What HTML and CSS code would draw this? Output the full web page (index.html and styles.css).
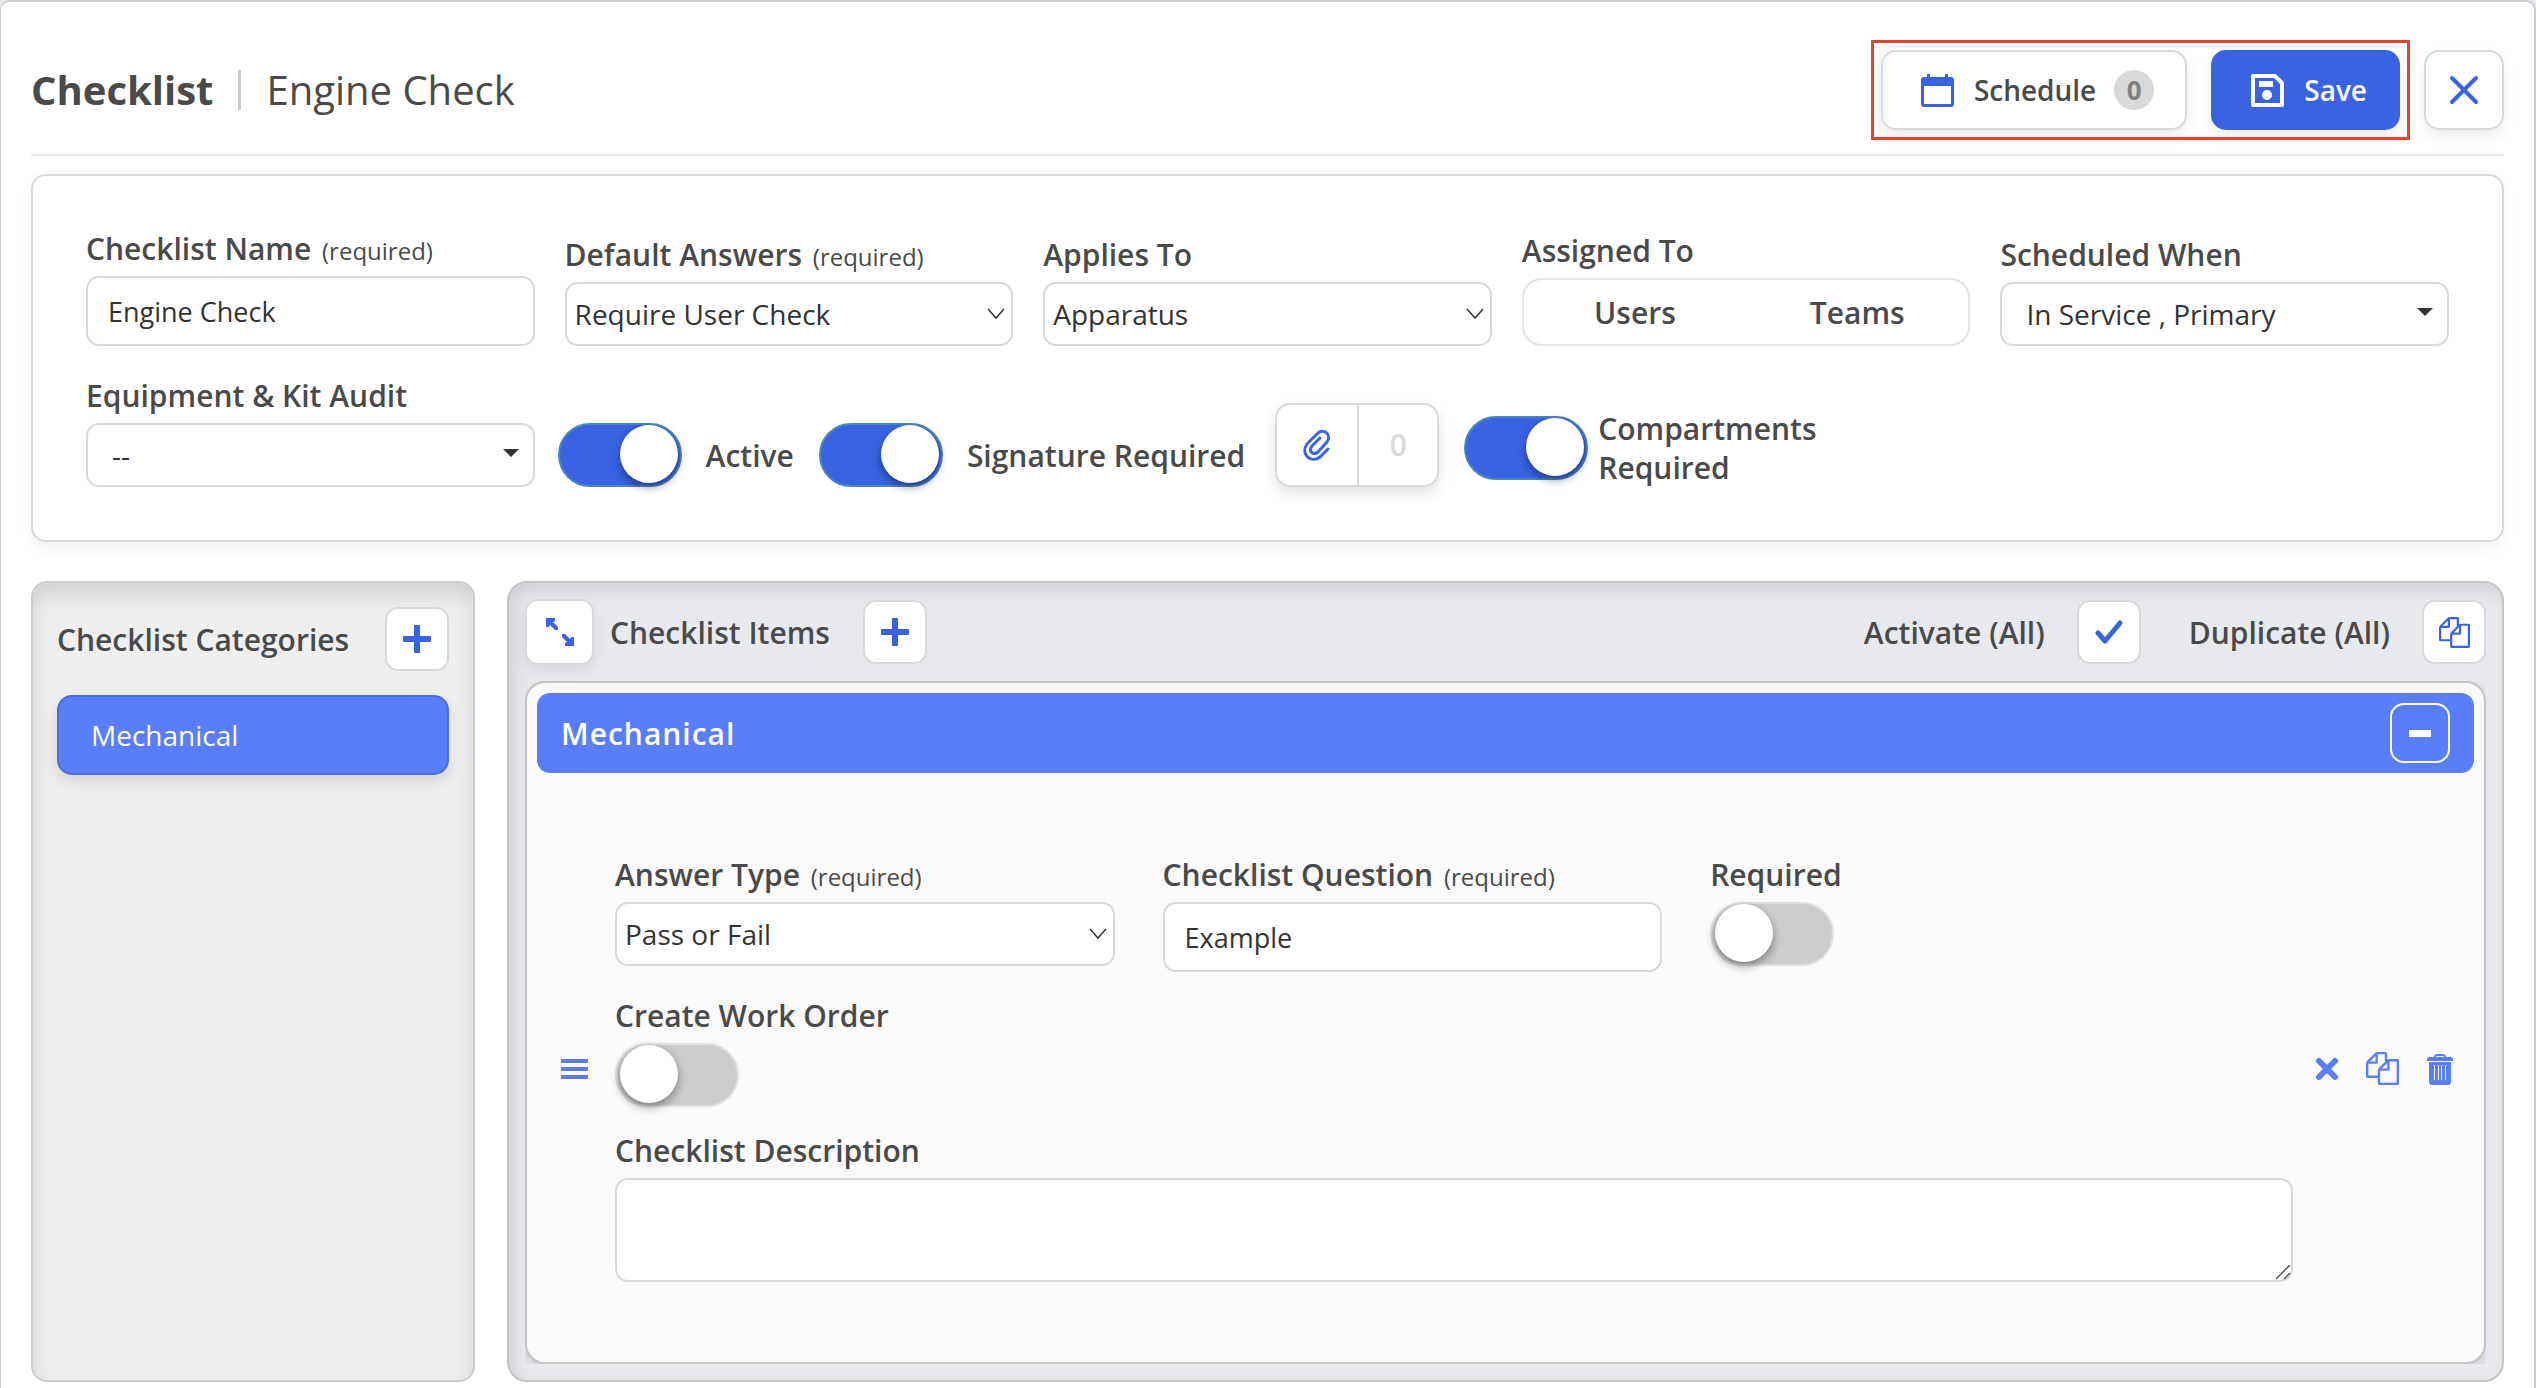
FILE: index.html
```html
<!DOCTYPE html>
<html lang="en">

<head>
    <meta charset="UTF-8">
    <meta name="viewport" content="width=device-width, initial-scale=1.0">
    <title>Checklist | Engine Check</title>
    <link rel="stylesheet" href="styles.css">
</head>

<body>
    <svg class="sprite" aria-hidden="true">
        <symbol id="plus" viewBox="0 0 28 28">
            <path d="M12 0h4q1 0 1 1v10h10q1 0 1 1v4q0 1-1 1h-10v10q0 1-1 1h-4q-1 0-1-1v-10h-10q-1 0-1-1v-4q0-1 1-1h10v-10q0-1 1-1z" />
        </symbol>
        <symbol id="copy" viewBox="0 0 1792 1792">
            <path d="M1696 384q40 0 68 28t28 68v1216q0 40-28 68t-68 28h-960q-40 0-68-28t-28-68v-288h-544q-40 0-68-28t-28-68v-672q0-40 20-88t48-76l408-408q28-28 76-48t88-20h416q40 0 68 28t28 68v328q68-40 128-40h416zm-544 213l-299 299h299v-299zm-640-384l-299 299h299v-299zm196 647l316-316v-416h-384v416q0 40-28 68t-68 28h-416v640h512v-256q0-40 20-88t48-76zm956 804v-1152h-384v416q0 40-28 68t-68 28h-416v640h896z" />
        </symbol>
    </svg>

    <main class="page">
        <header class="header">
            <h1 class="title">Checklist</h1>
            <span class="divider"></span>
            <h2 class="subtitle">Engine Check</h2>
            <div class="actions">
                <div class="highlight">
                    <button class="btn" type="button">
                        <svg width="33" height="33" viewBox="0 0 33 33">
                            <path fill="currentColor" fill-rule="evenodd" d="M6 0h3v3h15v-3h3v3h3q3 0 3 3v24q0 3-3 3h-27q-3 0-3-3v-24q0-3 3-3h3zM3 12v18h27v-18z" />
                        </svg>
                        <span>Schedule</span>
                        <span class="badge">0</span>
                    </button>
                    <button class="btn primary" type="button">
                        <svg width="33" height="33" viewBox="0 0 33 33">
                            <path fill="none" stroke="currentColor" stroke-width="4" stroke-linejoin="round" d="M2 2h22l7 7v22h-29z" />
                            <path fill="currentColor" d="M8 7h14v6h-14z" />
                            <circle cx="16" cy="21" r="5" fill="currentColor" />
                        </svg>
                        <span>Save</span>
                    </button>
                </div>
                <button class="btn close" type="button" aria-label="Close">
                    <svg width="30" height="30" viewBox="0 0 30 30">
                        <path fill="none" stroke="currentColor" stroke-width="4" stroke-linecap="round" d="M3 3l24 24M27 3L3 27" />
                    </svg>
                </button>
            </div>
        </header>

        <form class="card">
            <div class="fields">
                <div class="field">
                    <label for="name">Checklist Name <small>(required)</small></label>
                    <input class="control" id="name" type="text" value="Engine Check">
                </div>
                <div class="field">
                    <label for="answers">Default Answers <small>(required)</small></label>
                    <select class="control" id="answers">
                        <option>Require User Check</option>
                    </select>
                </div>
                <div class="field">
                    <label for="applies">Applies To</label>
                    <select class="control" id="applies">
                        <option>Apparatus</option>
                    </select>
                </div>
                <div class="field">
                    <span class="label">Assigned To</span>
                    <div class="segment">
                        <button type="button">Users</button>
                        <button type="button">Teams</button>
                    </div>
                </div>
                <div class="field">
                    <label for="when">Scheduled When</label>
                    <select class="control multi" id="when">
                        <option>In Service , Primary</option>
                    </select>
                </div>
                <div class="field">
                    <label for="audit">Equipment &amp; Kit Audit</label>
                    <select class="control multi" id="audit">
                        <option>--</option>
                    </select>
                </div>
                <div class="switches">
                    <label class="switch"><input class="toggle" type="checkbox" checked>Active</label>
                    <label class="switch"><input class="toggle" type="checkbox" checked>Signature Required</label>
                    <div class="attach">
                        <button type="button" aria-label="Attach file">
                            <svg width="28" height="32" viewBox="0 0 28 32">
                                <path fill="none" stroke="currentColor" stroke-width="3" stroke-linecap="round" d="M25 20l-8 8C8 35-3 25 4 15L15 4c6-5 14 2 9 9L15 23c-5 4-10-1-6-6l8-8" />
                            </svg>
                        </button>
                        <span>0</span>
                    </div>
                    <label class="switch narrow"><input class="toggle" type="checkbox" checked>Compartments Required</label>
                </div>
            </div>
        </form>

        <div class="columns">
            <aside class="categories">
                <div class="bar">
                    <h3>Checklist Categories</h3>
                    <button class="icon-btn" type="button" aria-label="Add category">
                        <svg width="28" height="28"><use href="#plus" /></svg>
                    </button>
                </div>
                <a class="category" href="#mechanical">Mechanical</a>
            </aside>

            <section class="items">
                <div class="bar">
                    <button class="icon-btn expand" type="button" aria-label="Expand">
                        <svg width="30" height="30" viewBox="0 0 30 30">
                            <path d="M1 1h9v3l-2 1 5 5v3h-3l-5-5-1 2h-3zM29 29h-9v-3l2-1-5-5v-3h3l5 5 1-2h3z" />
                        </svg>
                    </button>
                    <h3>Checklist Items</h3>
                    <button class="icon-btn add" type="button" aria-label="Add item">
                        <svg width="28" height="28"><use href="#plus" /></svg>
                    </button>
                    <div class="bulk">
                        <span>Activate (All)</span>
                        <button class="icon-btn" type="button" aria-label="Activate all">
                            <svg width="30" height="30" viewBox="0 0 30 30">
                                <path fill="none" stroke="currentColor" stroke-width="5" stroke-linecap="round" stroke-linejoin="round" d="M4 16l7 8L26 6" />
                            </svg>
                        </button>
                    </div>
                    <div class="bulk">
                        <span>Duplicate (All)</span>
                        <button class="icon-btn" type="button" aria-label="Duplicate all">
                            <svg width="31" height="31"><use href="#copy" /></svg>
                        </button>
                    </div>
                </div>

                <div class="clip">
                    <div class="group" id="mechanical">
                        <div class="group-head">
                            <h4>Mechanical</h4>
                            <button class="collapse" type="button" aria-label="Collapse"><i></i></button>
                        </div>
                        <form class="item">
                            <svg class="handle" width="28" height="22" viewBox="0 0 28 22">
                                <path stroke="currentColor" stroke-width="4" d="M0 3h27M0 11h27M0 19h27" />
                            </svg>
                            <div class="item-fields">
                                <div class="field">
                                    <label for="type">Answer Type <small>(required)</small></label>
                                    <select class="control" id="type">
                                        <option>Pass or Fail</option>
                                    </select>
                                </div>
                                <div class="field">
                                    <label for="question">Checklist Question <small>(required)</small></label>
                                    <input class="control" id="question" type="text" value="Example">
                                </div>
                                <div class="field">
                                    <label for="required">Required</label>
                                    <input class="toggle" id="required" type="checkbox">
                                </div>
                                <div class="field wide">
                                    <label for="order">Create Work Order</label>
                                    <input class="toggle" id="order" type="checkbox">
                                </div>
                                <div class="field wide">
                                    <label for="description">Checklist Description</label>
                                    <textarea class="control" id="description"></textarea>
                                </div>
                            </div>
                            <div class="row-actions">
                                <button type="button" aria-label="Deactivate">
                                    <svg width="24" height="24" viewBox="0 0 24 24">
                                        <path fill="none" stroke="currentColor" stroke-width="6" stroke-linecap="round" d="M4 4l16 16M20 4L4 20" />
                                    </svg>
                                </button>
                                <button type="button" aria-label="Duplicate">
                                    <svg width="33" height="33"><use href="#copy" /></svg>
                                </button>
                                <button type="button" aria-label="Delete">
                                    <svg width="28" height="32" viewBox="0 0 28 32">
                                        <path fill-rule="evenodd" d="M8 4q0-3 3-3h6q3 0 3 3h5q2 0 2 3v1h-26v-1q0-3 2-3zM10 4h8q0-1-1-1h-6q-1 0-1 1zM3 9h22v19q0 4-3 4h-16q-3 0-3-4zM8 12v15h1v-15zM12 12v15h1v-15zM15 12v15h1v-15zM19 12v15h1v-15z" />
                                    </svg>
                                </button>
                            </div>
                        </form>
                    </div>
                </div>
            </section>
        </div>
    </main>
</body>

</html>
```
FILE: styles.css
```css
* {
    box-sizing: border-box;
    margin: 0;
    padding: 0;
}

body {
    background: #e8e9ed;
    color: #4a4a4a;
    font-family: "Open Sans", "Noto Sans", sans-serif;
    font-size: 30px;
    font-weight: 600;
    line-height: 39px;
}

button,
input,
select,
textarea {
    font: inherit;
    color: inherit;
}

button {
    display: flex;
    align-items: center;
    justify-content: center;
    background: none;
    border: 0;
    cursor: pointer;
}

svg {
    fill: currentColor;
    flex: none;
}

.sprite {
    display: none;
}

.page {
    min-height: 100vh;
    padding: 48px 30px 7px;
    background: #fff;
    border: 2px solid #ccc;
    border-left-width: 1px;
    border-bottom: 0;
    border-radius: 10px 10px 0 0;
}

/* header */
.header {
    display: flex;
    align-items: center;
    padding-bottom: 24px;
    border-bottom: 2px solid #eaeaea;
}

.title,
.subtitle {
    font-size: 40px;
    line-height: 56px;
}

.subtitle {
    font-weight: 400;
}

.divider {
    width: 3px;
    height: 40px;
    margin: 0 25px;
    background: #ccc;
}

.actions {
    display: flex;
    gap: 24px;
    margin-left: auto;
}

.highlight {
    display: flex;
    gap: 24px;
    outline: 3px solid #ea4228;
    outline-offset: 7px;
}

.btn {
    height: 80px;
    padding: 0 31px 0 38px;
    gap: 20px;
    background: #fff;
    border: 2px solid #d9d9d9;
    border-radius: 15px;
    box-shadow: 0 6px 14px rgba(0, 0, 0, 0.08);
    font-size: 28px;
}

.btn svg {
    color: #3963e3;
}

.btn.primary,
.btn.primary svg {
    color: #fff;
}

.btn.primary {
    background: #3963e3;
    border-color: #3963e3;
}

.btn.close {
    width: 80px;
    padding: 0;
}

.badge {
    width: 40px;
    margin-left: -2px;
    background: #d9d9d9;
    border-radius: 20px;
    color: #808080;
    font-size: 26px;
    font-weight: 700;
    line-height: 40px;
}

/* checklist settings */
.card {
    margin-top: 18px;
    padding: 53px;
    border: 2px solid #d9d9d9;
    border-radius: 15px;
    box-shadow: 0 6px 14px rgba(0, 0, 0, 0.06);
}

.fields {
    display: grid;
    grid-template-columns: repeat(5, 1fr);
    align-items: end;
    gap: 30px;
}

.field {
    display: flex;
    flex-direction: column;
    gap: 8px;
}

.field small {
    margin-left: 3px;
    font-size: 24px;
    font-weight: 400;
    line-height: 24px;
}

.control {
    width: 100%;
    height: 70px;
    padding: 0 20px;
    background: #fff;
    border: 2px solid #d9d9d9;
    border-radius: 13px;
    color: #333;
    font-size: 27px;
    font-weight: 400;
}

select.control {
    height: 64px;
    padding: 0 30px 0 8px;
    appearance: none;
    background: #fff url("data:image/svg+xml,%3Csvg xmlns='http://www.w3.org/2000/svg' width='18' height='12'%3E%3Cpath fill='none' stroke='%23333' stroke-width='1.5' d='M1 1l8 9 8-9'/%3E%3C/svg%3E") no-repeat right 6px center;
    font-size: 28px;
}

select.multi {
    padding-left: 24px;
    background-image: url("data:image/svg+xml,%3Csvg xmlns='http://www.w3.org/2000/svg' width='16' height='12'%3E%3Cpath fill='%23333' d='M0 0h16l-8 8z'/%3E%3C/svg%3E");
    background-position: right 14px center;
}

textarea.control {
    display: block;
    height: 104px;
    resize: vertical;
}

textarea::-webkit-resizer {
    background: url("data:image/svg+xml,%3Csvg xmlns='http://www.w3.org/2000/svg' width='15' height='15'%3E%3Cpath stroke='%23555' stroke-width='1.5' d='M0 14L14 0M8 14l6-6'/%3E%3C/svg%3E") no-repeat right bottom;
}

.segment {
    display: grid;
    grid-template-columns: 1fr 1fr;
    height: 68px;
    border: 2px solid #e5e5e5;
    border-radius: 20px;
}

.switches {
    display: flex;
    grid-column: span 4;
    align-items: flex-end;
    gap: 25px;
    margin-left: -7px;
}

.switch {
    display: flex;
    align-items: center;
    gap: 24px;
}

.switch.narrow {
    gap: 10px;
    width: 350px;
}

.toggle {
    flex: none;
    width: 124px;
    height: 64px;
    appearance: none;
    background: #ccc;
    border: 2px solid #e0e0e0;
    border-radius: 32px;
}

.toggle::before {
    content: "";
    display: block;
    width: 58px;
    height: 58px;
    margin-left: 3px;
    background: #fff;
    border-radius: 50%;
    box-shadow: 0 4px 10px rgba(0, 0, 0, 0.4);
}

.toggle:checked {
    background: #3963e3;
    border-color: #4a86c0;
}

.toggle:checked::before {
    margin-left: 60px;
}

.attach {
    display: flex;
    margin-left: 5px;
    height: 84px;
    border: 2px solid #d9d9d9;
    border-radius: 15px;
    box-shadow: 0 6px 14px rgba(0, 0, 0, 0.12);
}

.attach button {
    width: 80px;
    color: #3963e3;
}

.attach span {
    width: 80px;
    border-left: 2px solid #d9d9d9;
    color: #d9d9d9;
    line-height: 80px;
    text-align: center;
}

/* lower panels */
.columns {
    display: grid;
    grid-template-columns: 444px 1fr;
    gap: 32px;
    margin-top: 39px;
}

h3 {
    font-size: 30px;
    font-weight: 600;
}

.bar {
    display: flex;
    align-items: center;
}

.categories {
    padding: 24px;
    background: #efefef;
    border: 2px solid #ccc;
    border-radius: 16px;
    box-shadow: inset 0 12px 20px rgba(0, 0, 0, 0.12);
}

.categories .bar {
    justify-content: space-between;
}

.icon-btn {
    width: 64px;
    height: 64px;
    background: #fff;
    border: 2px solid #d9d9d9;
    border-radius: 13px;
    color: #3963e3;
}

.category {
    display: block;
    margin-top: 24px;
    padding: 0 32px;
    background: #5a7df9;
    border: 2px solid #4c6cdc;
    border-radius: 15px;
    box-shadow: 0 6px 14px rgba(0, 0, 0, 0.12);
    color: #fff;
    font-size: 28px;
    font-weight: 400;
    line-height: 76px;
    text-decoration: none;
}

.items {
    padding: 16px;
    background: #e8e9ed;
    border: 2px solid #c4c4c4;
    border-radius: 20px;
    box-shadow: inset 6px 8px 16px rgba(0, 0, 0, 0.1);
}

.expand {
    width: 69px;
    height: 66px;
    margin-right: 16px;
    box-shadow: 0 6px 14px rgba(0, 0, 0, 0.08);
}

.add {
    margin: 0 auto 0 33px;
}

.bulk {
    display: flex;
    align-items: center;
    gap: 32px;
    margin-left: 48px;
}

.clip {
    margin-top: 16px;
    overflow: hidden;
}

.group {
    padding: 10px;
    background: #fafafa;
    border: 2px solid #c4c4c4;
    border-radius: 20px;
    box-shadow: 0 6px 14px rgba(0, 0, 0, 0.12);
}

.group-head {
    display: flex;
    align-items: center;
    justify-content: space-between;
    height: 80px;
    padding: 0 24px;
    background: #5a7df9;
    border-radius: 13px;
    color: #fff;
}

h4 {
    font-size: 30px;
    font-weight: 600;
    letter-spacing: 1px;
}

.collapse {
    width: 60px;
    height: 60px;
    border: 2px solid #fff;
    border-radius: 14px;
}

.collapse i {
    width: 22px;
    height: 7px;
    background: #fff;
}

.item {
    display: flex;
    align-items: center;
    padding: 82px 20px 70px 24px;
    color: #5a7df9;
}

.item-fields {
    display: grid;
    flex: 1;
    grid-template-columns: 6fr 6fr 7fr;
    gap: 24px 48px;
    margin: 0 22px 0 26px;
    color: #4a4a4a;
}

.wide {
    grid-column: 1 / -1;
}

.row-actions {
    display: flex;
    gap: 27px;
}
```
